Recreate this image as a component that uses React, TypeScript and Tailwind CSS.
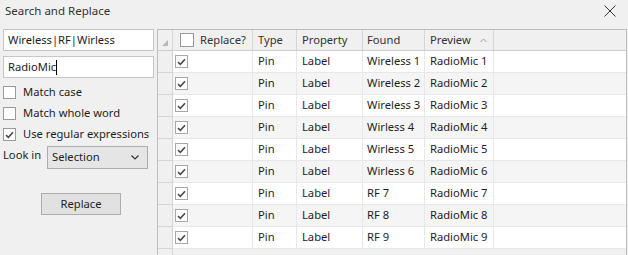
import React from "react";

const rows: [string, string][] = [
  ["Wireless 1", "RadioMic 1"],
  ["Wireless 2", "RadioMic 2"],
  ["Wireless 3", "RadioMic 3"],
  ["Wirless 4", "RadioMic 4"],
  ["Wirless 5", "RadioMic 5"],
  ["Wirless 6", "RadioMic 6"],
  ["RF 7", "RadioMic 7"],
  ["RF 8", "RadioMic 8"],
  ["RF 9", "RadioMic 9"],
];

function Check() {
  return (
    <svg width="9" height="8" viewBox="0 0 9 8" className="block">
      <path d="M1 4.2 L3.4 6.4 L8 1.2" fill="none" stroke="#4a4a4a" strokeWidth="1.6" />
    </svg>
  );
}

function Box({ checked, light }: { checked?: boolean; light?: boolean }) {
  return (
    <span
      className={
        "flex items-center justify-center w-[13px] h-[13px] border bg-white shrink-0 " +
        (light ? "border-[#a8a8a8]" : "border-[#9a9a9a]")
      }
    >
      {checked ? <Check /> : null}
    </span>
  );
}

export default function App() {
  return (
    <div
      className="w-[628px] h-[255px] bg-[#f0f0f0] overflow-hidden flex flex-col text-[11.2px] text-[#1e1e1e] whitespace-nowrap"
      style={{ fontFamily: '"Noto Sans", "Open Sans", sans-serif' }}
    >
      <div className="h-[29px] flex items-start justify-between pl-[5px] pr-[12px] pt-[2px] shrink-0">
        <span className="text-[#333] text-[11.5px] leading-[18px]">Search and Replace</span>
        <svg width="12" height="12" viewBox="0 0 12 12" className="mt-[3px]">
          <path d="M0.5 0.5 L11.5 11.5 M11.5 0.5 L0.5 11.5" stroke="#333" strokeWidth="1" />
        </svg>
      </div>
      <div className="flex flex-1 min-h-0">
        <div className="w-[157px] shrink-0 pl-[3px] flex flex-col">
          <div className="w-[151px] h-[22px] bg-white border border-[#c6c6c6] flex items-center pl-[4px]">
            Wireless|RF|Wirless
          </div>
          <div className="mt-[5px] w-[151px] h-[22px] bg-white border border-[#c6c6c6] flex items-center pl-[4px]">
            RadioMic<span className="w-[1px] h-[15px] bg-black" />
          </div>
          <div className="mt-[4px] h-[21px] flex items-center gap-[7px]">
            <Box />
            <span>Match case</span>
          </div>
          <div className="h-[21px] flex items-center gap-[7px]">
            <Box />
            <span>Match whole word</span>
          </div>
          <div className="h-[21px] flex items-center gap-[7px]">
            <Box checked />
            <span>Use regular expressions</span>
          </div>
          <div className="mt-[1px] h-[23px] flex items-start">
            <span className="w-[44px] leading-[18px]">Look in</span>
            <div className="w-[101px] h-[23px] bg-[#e5e5e5] border border-[#acacac] flex items-center justify-between pl-[4px] pr-[8px]">
              <span>Selection</span>
              <svg width="8" height="5" viewBox="0 0 8 5">
                <path d="M0.5 0.5 L4 4 L7.5 0.5" fill="none" stroke="#333" strokeWidth="1.2" />
              </svg>
            </div>
          </div>
          <div className="mt-[24px] ml-[38px] w-[80px] h-[22px] bg-[#e1e1e1] border border-[#adadad] flex items-center justify-center">
            Replace
          </div>
        </div>
        <div className="flex-1 mr-[1px] flex flex-col border-l border-t border-r border-[#bdbdbd] bg-[#f0f0f0] min-w-0">
          <div className="flex h-[21px] shrink-0 border-b border-[#cdcdcd] bg-[#f0f0f0] text-[#333]">
            <div className="w-[15px] border-r border-[#d5d5d5] relative shrink-0">
              <svg width="6" height="6" viewBox="0 0 6 6" className="absolute left-[4px] bottom-[4px]">
                <path d="M6 0 L6 6 L0 6 Z" fill="#b8b8b8" />
              </svg>
            </div>
            <div className="w-[80px] border-r border-[#d5d5d5] flex items-center pl-[7px] gap-[6px] shrink-0">
              <span className="w-[14px] h-[14px] border border-[#9a9a9a] bg-white" />
              <span>Replace?</span>
            </div>
            <div className="w-[44px] border-r border-[#d5d5d5] flex items-center pl-[5px] shrink-0">Type</div>
            <div className="w-[66px] border-r border-[#d5d5d5] flex items-center pl-[5px] shrink-0">Property</div>
            <div className="w-[62px] border-r border-[#d5d5d5] flex items-center pl-[4px] shrink-0">Found</div>
            <div className="w-[69px] border-r border-[#d5d5d5] flex items-center pl-[5px] gap-[9px] shrink-0">
              <span>Preview</span>
              <svg width="7" height="5" viewBox="0 0 7 5">
                <path d="M0.5 4 L3.5 1 L6.5 4" fill="none" stroke="#9a9a9a" strokeWidth="1" />
              </svg>
            </div>
            <div className="flex-1" />
          </div>
          {rows.map(([found, preview], i) => {
            const bg = i % 2 === 1 ? "bg-[#f5f5f5]" : "bg-white";
            return (
              <div key={i} className="flex h-[22px] shrink-0">
                <div className="w-[15px] shrink-0 bg-[#f0f0f0] border-r border-b border-[#d5d5d5]" />
                <div className={"flex flex-1 border-b border-[#e8e8e8] " + bg}>
                  <div className="w-[80px] shrink-0 border-r border-[#e8e8e8] flex items-center pl-[2px]">
                    <Box checked light />
                  </div>
                  <div className="w-[44px] shrink-0 border-r border-[#e8e8e8] flex items-center pl-[5px]">Pin</div>
                  <div className="w-[66px] shrink-0 border-r border-[#e8e8e8] flex items-center pl-[5px]">Label</div>
                  <div className="w-[62px] shrink-0 border-r border-[#e8e8e8] flex items-center pl-[4px]">{found}</div>
                  <div className="w-[69px] shrink-0 border-r border-[#e8e8e8] flex items-center pl-[5px]">{preview}</div>
                  <div className="flex-1" />
                </div>
              </div>
            );
          })}
          <div className="flex flex-1">
            <div className="w-[15px] shrink-0 border-r border-[#d5d5d5]" />
          </div>
        </div>
      </div>
    </div>
  );
}
